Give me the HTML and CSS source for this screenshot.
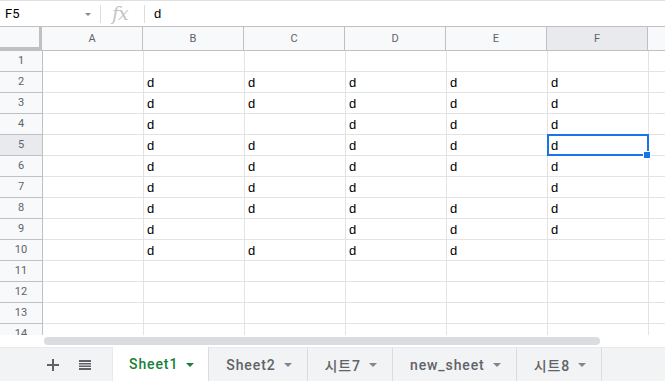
FILE: index.html
```html
<!DOCTYPE HTML>
<html>
<head>
	<meta charset="utf-8">
	<link rel="stylesheet" href="styles.css">
</head>
<body>

	<div class="fbar">
		<div class="namebox">F5<span class="caret"></span></div>
		<div class="fx">fx</div>
		<div class="formula">d</div>
	</div>

	<div class="grid">
		<div class="row head">
			<div class="corner"></div>
			<div class="ch">A</div><div class="ch">B</div><div class="ch">C</div><div class="ch">D</div><div class="ch">E</div><div class="ch sel">F</div><div class="ch"></div>
		</div>
		<div class="row"><div class="rh">1</div><div class="c"></div><div class="c"></div><div class="c"></div><div class="c"></div><div class="c"></div><div class="c"></div><div class="c"></div></div>
		<div class="row"><div class="rh">2</div><div class="c"></div><div class="c">d</div><div class="c">d</div><div class="c">d</div><div class="c">d</div><div class="c">d</div><div class="c"></div></div>
		<div class="row"><div class="rh">3</div><div class="c"></div><div class="c">d</div><div class="c">d</div><div class="c">d</div><div class="c">d</div><div class="c">d</div><div class="c"></div></div>
		<div class="row"><div class="rh">4</div><div class="c"></div><div class="c">d</div><div class="c"></div><div class="c">d</div><div class="c">d</div><div class="c">d</div><div class="c"></div></div>
		<div class="row"><div class="rh sel">5</div><div class="c"></div><div class="c">d</div><div class="c">d</div><div class="c">d</div><div class="c">d</div><div class="c active">d<span class="handle"></span></div><div class="c"></div></div>
		<div class="row"><div class="rh">6</div><div class="c"></div><div class="c">d</div><div class="c">d</div><div class="c">d</div><div class="c">d</div><div class="c">d</div><div class="c"></div></div>
		<div class="row"><div class="rh">7</div><div class="c"></div><div class="c">d</div><div class="c">d</div><div class="c">d</div><div class="c"></div><div class="c">d</div><div class="c"></div></div>
		<div class="row"><div class="rh">8</div><div class="c"></div><div class="c">d</div><div class="c">d</div><div class="c">d</div><div class="c">d</div><div class="c">d</div><div class="c"></div></div>
		<div class="row"><div class="rh">9</div><div class="c"></div><div class="c">d</div><div class="c"></div><div class="c">d</div><div class="c">d</div><div class="c">d</div><div class="c"></div></div>
		<div class="row"><div class="rh">10</div><div class="c"></div><div class="c">d</div><div class="c">d</div><div class="c">d</div><div class="c">d</div><div class="c"></div><div class="c"></div></div>
		<div class="row"><div class="rh">11</div><div class="c"></div><div class="c"></div><div class="c"></div><div class="c"></div><div class="c"></div><div class="c"></div><div class="c"></div></div>
		<div class="row"><div class="rh">12</div><div class="c"></div><div class="c"></div><div class="c"></div><div class="c"></div><div class="c"></div><div class="c"></div><div class="c"></div></div>
		<div class="row"><div class="rh">13</div><div class="c"></div><div class="c"></div><div class="c"></div><div class="c"></div><div class="c"></div><div class="c"></div><div class="c"></div></div>
		<div class="row"><div class="rh">14</div><div class="c"></div><div class="c"></div><div class="c"></div><div class="c"></div><div class="c"></div><div class="c"></div><div class="c"></div></div>
	</div>

	<div class="hscroll"><div class="thumb"></div></div>

	<div class="tabs">
		<div class="tools">
			<svg width="14" height="14" viewBox="0 0 14 14"><path d="M6 1h2v5h5v2H8v5H6V8H1V6h5z" fill="#5f6368"/></svg>
			<svg width="14" height="14" viewBox="0 0 14 14"><path d="M1 2h12v2H1zM1 5h12v1.5H1zM1 7.5h12V9H1zM1 10h12v2H1z" fill="#5f6368"/></svg>
		</div>
		<div class="tab on">Sheet1<span class="tcaret"></span></div>
		<div class="tab">Sheet2<span class="tcaret"></span></div>
		<div class="tab">시트7<span class="tcaret"></span></div>
		<div class="tab">new_sheet<span class="tcaret"></span></div>
		<div class="tab">시트8<span class="tcaret"></span></div>
	</div>

</body>
</html>
```

FILE: styles.css
```css
body {
	margin: 0;
	width: 665px;
	height: 381px;
	overflow: hidden;
	background: #fff;
	font-family: Roboto, "Liberation Sans", "Noto Sans CJK KR", sans-serif;
}

/* formula bar */
.fbar {
	display: flex;
	align-items: center;
	height: 25px;
	border-top: 1px solid #e0e0e0;
	font-size: 13px;
	color: #000;
}
.namebox {
	position: relative;
	width: 101px;
	box-sizing: border-box;
	padding-left: 5px;
	border-right: 1px solid #dadce0;
	height: 18px;
	line-height: 18px;
}
.caret {
	position: absolute;
	right: 9px;
	top: 8px;
	border-left: 3px solid transparent;
	border-right: 3px solid transparent;
	border-top: 3px solid #888;
}
.fx {
	width: 44px;
	box-sizing: border-box;
	padding-left: 11px;
	border-right: 1px solid #dadce0;
	height: 18px;
	line-height: 16px;
	font-family: "DejaVu Serif", "Liberation Serif", serif;
	font-style: italic;
	font-size: 19px;
	color: #c4c4c4;
	letter-spacing: -1px;
}
.formula {
	padding-left: 9px;
	font-family: "Liberation Sans", Arial, sans-serif;
	font-size: 13px;
	color: #000;
}

/* grid */
.grid {
	height: 309px;
	overflow: hidden;
	border-top: 1px solid #c0c0c0;
	box-sizing: border-box;
}
.row {
	display: flex;
	height: 21px;
}
.row.head {
	height: 24px;
}
.corner {
	flex: none;
	width: 43px;
	box-sizing: border-box;
	background: #f8f9fa;
	border-right: 4px solid #c0c0c0;
	border-bottom: 4px solid #c0c0c0;
	margin-right: -1px;
}
.ch {
	flex: none;
	width: 101px;
	box-sizing: border-box;
	background: #f8f9fa;
	border-right: 1px solid #c0c0c0;
	border-bottom: 1px solid #c0c0c0;
	text-align: center;
	line-height: 23px;
	font-size: 11px;
	color: #5f6368;
}
.ch:first-of-type {
	border-left: 1px solid #c0c0c0;
}
.ch.sel, .rh.sel {
	background: #e8eaed;
}
.rh {
	flex: none;
	width: 43px;
	box-sizing: border-box;
	background: #f8f9fa;
	border-right: 1px solid #c0c0c0;
	border-bottom: 1px solid #c0c0c0;
	text-align: center;
	line-height: 20px;
	font-size: 11px;
	color: #5f6368;
}
.c {
	position: relative;
	flex: none;
	width: 101px;
	box-sizing: border-box;
	border-right: 1px solid #e2e3e3;
	border-bottom: 1px solid #e2e3e3;
	padding-left: 3px;
	line-height: 21px;
	font-family: "Liberation Sans", Arial, sans-serif;
	font-size: 13px;
	color: #000;
}
.c.active::after {
	content: "";
	position: absolute;
	left: -1px;
	top: -1px;
	width: 102px;
	height: 22px;
	border: 2px solid #1a73e8;
	box-sizing: border-box;
}
.handle {
	position: absolute;
	right: -3px;
	bottom: -4px;
	width: 6px;
	height: 6px;
	background: #1a73e8;
	border: 1px solid #fff;
	z-index: 1;
}

/* horizontal scroll */
.hscroll {
	height: 12px;
	padding: 2px 0 0 44px;
	box-sizing: border-box;
	background: #fff;
}
.thumb {
	width: 556px;
	height: 8px;
	border-radius: 4px;
	background: #dadce0;
}

/* sheet tabs */
.tabs {
	display: flex;
	height: 34px;
	box-sizing: border-box;
	border-top: 1px solid #e8eaed;
	background: #f1f3f4;
	font-size: 14px;
	font-weight: 500;
	color: #5f6368;
}
.tools {
	display: flex;
	align-items: center;
	gap: 18px;
	width: 113px;
	padding-left: 46px;
	box-sizing: border-box;
	border-right: 1px solid #e8eaed;
}
.tab {
	display: flex;
	align-items: center;
	padding: 0 15px 0 17px;
	border-right: 1px solid #dadce0;
	letter-spacing: 0.9px;
}
.tab.on {
	background: #fff;
	color: #188038;
	margin-top: -1px;
	padding: 0 14px 0 16px;
}
.tcaret {
	margin-left: 8px;
	margin-top: 1px;
	border-left: 4px solid transparent;
	border-right: 4px solid transparent;
	border-top: 4px solid #80868b;
}
.tab.on .tcaret {
	border-top-color: #188038;
}
```
